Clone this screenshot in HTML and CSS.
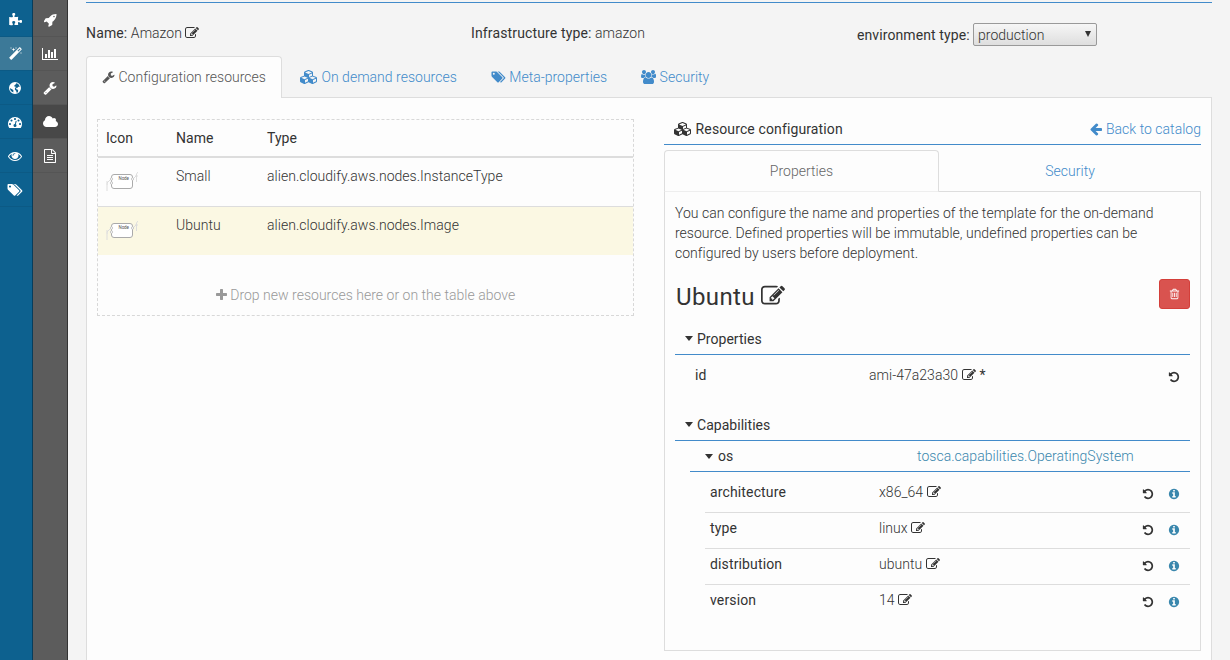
FILE: index.html
```html
<!DOCTYPE html>
<html lang="en">
<head>
<meta charset="utf-8">
<title>Amazon</title>
<link rel="stylesheet" href="styles.css">
</head>
<body>
<svg class="sprite">
<symbol id="edit" viewBox="0 0 1792 1792"><path d="M888 1184l116-116-152-152-116 116v56h96v96h56zm440-720q-16-16-33 1l-350 350q-17 17-1 33t33-1l350-350q17-17 1-33zm80 594v190q0 119-84.500 203.500t-203.500 84.500h-832q-119 0-203.500-84.500t-84.500-203.500v-832q0-119 84.500-203.500t203.500-84.500h832q63 0 117 25 15 7 18 23 3 17-9 29l-49 49q-14 14-32 8-23-6-45-6h-832q-66 0-113 47t-47 113v832q0 66 47 113t113 47h832q66 0 113-47t47-113v-126q0-13 9-22l64-64q15-15 35-7t20 29zm-96-738l288 288-672 672h-288v-288zm444 132l-92 92-288-288 92-92q28-28 68-28t68 28l152 152q28 28 28 68t-28 68z"/></symbol>
<symbol id="wrench" viewBox="0 0 1792 1792"><path d="M448 1472q0-26-19-45t-45-19-45 19-19 45 19 45 45 19 45-19 19-45zm644-420l-682 682q-37 37-90 37-52 0-91-37l-106-108q-38-36-38-90 0-53 38-91l681-681q39 98 114.500 173.500t173.500 114.500zm634-435q0 39-23 106-47 134-164.500 217.500t-258.500 83.500q-185 0-316.500-131.500t-131.500-316.500 131.500-316.500 316.500-131.500q58 0 121.500 16.500t107.500 46.500q16 11 16 28t-16 28l-293 169v224l193 107q5-3 79-48.500t135.500-81 70.500-35.500q15 0 23.500 10t8.500 25z"/></symbol>
<symbol id="tags" viewBox="64 0 2048 1792"><path d="M576 448q0-53-37.500-90.500t-90.500-37.500-90.500 37.500-37.500 90.500 37.500 90.500 90.500 37.500 90.500-37.500 37.500-90.500zm1067 576q0 53-37 90l-491 492q-39 37-91 37-53 0-90-37l-715-716q-38-37-64.500-101t-26.500-117v-416q0-52 38-90t90-38h416q53 0 117 26.500t102 64.500l715 714q37 39 37 91zm384 0q0 53-37 90l-491 492q-39 37-91 37-36 0-59-14t-53-45l470-470q37-37 37-90 0-52-37-91l-715-714q-38-38-102-64.500t-117-26.500h224q53 0 117 26.500t102 64.500l715 714q37 39 37 91z"/></symbol>
<symbol id="plus" viewBox="192 0 1408 1792"><path d="M1600 736v192q0 40-28 68t-68 28h-416v416q0 40-28 68t-68 28h-192q-40 0-68-28t-28-68v-416h-416q-40 0-68-28t-28-68v-192q0-40 28-68t68-28h416v-416q0-40 28-68t68-28h192q40 0 68 28t28 68v416h416q40 0 68 28t28 68z"/></symbol>
<symbol id="back" viewBox="128 0 1664 1792"><path d="M1664 896v128q0 53-32.500 90.500t-84.500 37.500h-704l293 294q38 36 38 90t-38 90l-75 76q-37 37-90 37-52 0-91-37l-651-652q-37-37-37-90 0-52 37-91l651-650q38-38 91-38 52 0 90 38l75 74q38 38 38 91t-38 91l-293 293h704q52 0 84.500 37.500t32.500 90.500z"/></symbol>
<symbol id="undo" viewBox="128 0 1536 1792"><path d="M1664 896q0 156-61 298t-164 245-245 164-298 61q-172 0-327-72.500t-264-204.500q-7-10-6.500-22.500t8.500-20.500l137-138q10-9 25-9 16 2 23 12 73 95 179 147t225 52q104 0 198.500-40.500t163.500-109.500 109.500-163.500 40.500-198.500-40.500-198.500-109.500-163.500-163.500-109.500-198.500-40.500q-98 0-188 35.500t-160 101.500l137 138q31 30 14 69-17 40-59 40h-448q-26 0-45-19t-19-45v-448q0-42 40-59 39-17 69 14l130 129q107-101 244.500-156.500t284.500-55.500q156 0 298 61t245 164 164 245 61 298z"/></symbol>
<symbol id="info" viewBox="128 0 1536 1792"><path d="M1152 1376v-160q0-14-9-23t-23-9h-96v-512q0-14-9-23t-23-9h-320q-14 0-23 9t-9 23v160q0 14 9 23t23 9h96v320h-96q-14 0-23 9t-9 23v160q0 14 9 23t23 9h448q14 0 23-9t9-23zm-128-896v-160q0-14-9-23t-23-9h-192q-14 0-23 9t-9 23v160q0 14 9 23t23 9h192q14 0 23-9t9-23zm640 416q0 209-103 385.500t-279.500 279.500-385.500 103-385.500-103-279.500-279.500-103-385.500 103-385.500 279.500-279.500 385.500-103 385.500 103 279.500 279.500 103 385.500z"/></symbol>
<symbol id="trash" viewBox="192 0 1408 1792"><path d="M704 736v576q0 14-9 23t-23 9h-64q-14 0-23-9t-9-23v-576q0-14 9-23t23-9h64q14 0 23 9t9 23zm256 0v576q0 14-9 23t-23 9h-64q-14 0-23-9t-9-23v-576q0-14 9-23t23-9h64q14 0 23 9t9 23zm256 0v576q0 14-9 23t-23 9h-64q-14 0-23-9t-9-23v-576q0-14 9-23t23-9h64q14 0 23 9t9 23zm128 724v-948h-896v948q0 22 7 40.500t14.500 27 10.500 8.500h832q3 0 10.500-8.500t14.500-27 7-40.500zm-672-1076h448l-48-117q-7-9-17-11h-317q-10 2-17 11zm928 32v64q0 14-9 23t-23 9h-96v948q0 83-47 143.500t-113 60.500h-832q-66 0-113-58.500t-47-141.500v-952h-96q-14 0-23-9t-9-23v-64q0-14 9-23t23-9h309l70-167q15-37 54-63t79-26h320q40 0 79 26t54 63l70 167h309q14 0 23 9t9 23z"/></symbol>
<symbol id="cloud" viewBox="64 0 1920 1792"><path d="M1984 1152q0 159-112.500 271.500t-271.500 112.500h-1088q-185 0-316.500-131.500t-131.500-316.500q0-132 71-241.500t187-163.500q-2-28-2-43 0-212 150-362t362-150q158 0 286.500 88t187.500 230q70-62 166-62 106 0 181 75t75 181q0 75-41 138 129 30 213 134.500t84 239.500z"/></symbol>
<symbol id="eye" viewBox="0 0 1792 1792"><path d="M1664 960q-152-236-381-353 61 104 61 225 0 185-131.500 316.500t-316.500 131.500-316.500-131.500-131.500-316.500q0-121 61-225-229 117-381 353 133 205 333.500 326.500t434.500 121.500 434.500-121.500 333.500-326.500zm-720-384q0-20-14-34t-34-14q-125 0-214.500 89.500t-89.500 214.500q0 20 14 34t34 14 34-14 14-34q0-86 61-147t147-61q20 0 34-14t14-34zm848 384q0 34-20 69-140 230-376.500 368.500t-499.500 138.500-499.500-139-376.500-368q-20-35-20-69t20-69q140-229 376.500-368t499.500-139 499.500 139 376.500 368q20 35 20 69z"/></symbol>
<symbol id="chart" viewBox="0 0 2048 1792"><path d="M640 896v512h-256v-512h256zm384-512v1024h-256v-1024h256zm1024 1152v128h-2048v-1536h128v1408h1920zm-640-896v768h-256v-768h256zm384-384v1152h-256v-1152h256z"/></symbol>
<symbol id="rocket" viewBox="64 0 1664 1792"><path d="M1440 448q0-40-28-68t-68-28-68 28-28 68 28 68 68 28 68-28 28-68zm224-288q0 249-75.500 430.500t-253.500 360.500q-81 80-195 176l-20 379q-2 16-16 26l-384 224q-7 4-16 4-12 0-23-9l-64-64q-13-14-8-32l85-276-281-281-276 85q-3 1-9 1-14 0-23-9l-64-64q-17-19-5-39l224-384q10-14 26-16l379-20q96-114 176-195 188-187 358-258t431-71q14 0 24 9.500t10 22.500z"/></symbol>
<symbol id="file" viewBox="128 0 1536 1792"><path d="M1596 380q28 28 48 76t20 88v1152q0 40-28 68t-68 28h-1344q-40 0-68-28t-28-68v-1600q0-40 28-68t68-28h896q40 0 88 20t76 48zm-444-244v376h376q-10-29-22-41l-313-313q-12-12-41-22zm384 1528v-1024h-416q-40 0-68-28t-28-68v-416h-768v1536h1280zm-1024-864q0-14 9-23t23-9h704q14 0 23 9t9 23v64q0 14-9 23t-23 9h-704q-14 0-23-9t-9-23v-64zm736 224q14 0 23 9t9 23v64q0 14-9 23t-23 9h-704q-14 0-23-9t-9-23v-64q0-14 9-23t23-9h704zm0 256q14 0 23 9t9 23v64q0 14-9 23t-23 9h-704q-14 0-23-9t-9-23v-64q0-14 9-23t23-9h704z"/></symbol>
<symbol id="cubes" viewBox="0 0 2304 1792"><path d="M640 1632l384-192v-314l-384 164v342zm-64-454l404-173-404-173-404 173zm1088 454l384-192v-314l-384 164v342zm-64-454l404-173-404-173-404 173zm-448-293l384-165v-266l-384 164v267zm-64-379l441-189-441-189-441 189zm1088 518v416q0 36-19 67t-52 47l-448 224q-25 14-57 14t-57-14l-448-224q-4-2-7-4-2 2-7 4l-448 224q-25 14-57 14t-57-14l-448-224q-33-16-52-47t-19-67v-416q0-38 21.500-70t56.500-48l434-186v-400q0-38 21.500-70t56.500-48l448-192q23-10 50-10t50 10l448 192q35 16 56.500 48t21.500 70v400l434 186q36 16 57 48t21 70z"/></symbol>
<symbol id="users" viewBox="-64 0 1920 1792"><path d="M529 896q-162 5-265 128h-134q-82 0-138-40.500t-56-118.500q0-353 124-353 6 0 43.500 21t97.500 42.500 119 21.500q67 0 133-23-5 37-5 66 0 159 93 293zm1071 637q0 120-73 189.500t-194 69.500h-874q-121 0-194-69.500t-73-189.500q0-53 3.500-103.500t14-109 26.500-108.500 43-97.500 62-81 85.500-53.500 111.500-20q10 0 43 21.500t73 48 107 48 135 21.500 135-21.500 107-48 73-48 43-21.500q61 0 111.500 20t85.500 53.500 62 81 43 97.500 26.500 108.500 14 109 3.500 103.500zm-1024-1277q0 106-75 181t-181 75-181-75-75-181 75-181 181-75 181 75 75 181zm704 384q0 159-112.500 271.500t-271.500 112.500-271.500-112.500-112.500-271.500 112.500-271.500 271.500-112.500 271.500 112.500 112.500 271.500zm576 225q0 78-56 118.500t-138 40.500h-134q-103-123-265-128 93-134 93-293 0-29-5-66 66 23 133 23 59 0 119-21.500t97.500-42.500 43.500-21q124 0 124 353zm-128-609q0 106-75 181t-181 75-181-75-75-181 75-181 181-75 181 75 75 181z"/></symbol>
<symbol id="puzzle" viewBox="64 0 1664 1792"><path d="M1755 1082q0 81-44.500 135t-123.500 54q-41 0-77.500-17.500t-59-38-56.500-38-71-17.500q-110 0-110 124 0 39 16 115t15 115v5q-22 0-33 1-34 3-97.500 11.500t-115.500 13.500-98 5q-61 0-103-26.500t-42-83.500q0-37 17.500-71t38-56.500 38-59 17.500-77.500q0-79-54-123.500t-135-44.500q-84 0-143 45.500t-59 127.500q0 43 15 83t33.500 64.500 33.500 53 15 50.500q0 45-46 89-37 35-117 35-95 0-245-24-9-2-27.500-4t-27.500-4l-13-2q-1 0-3-1-2 0-2-1v-1024q2 1 17.500 3.500t34 5 21.500 3.500q150 24 245 24 80 0 117-35 46-44 46-89 0-22-15-50.500t-33.500-53-33.500-64.500-15-83q0-82 59-127.500t144-45.500q80 0 134 44.500t54 123.500q0 41-17.500 77.500t-38 59-38 56.500-17.500 71q0 57 42 83.500t103 26.500q64 0 180-15t163-17v2q-1 2-3.500 17.500t-5 34-3.500 21.500q-24 150-24 245 0 80 35 117 44 46 89 46 22 0 50.500-15t53-33.500 64.500-33.500 83-15q82 0 127.500 59t45.500 143z"/></symbol>
<symbol id="magic" viewBox="64 0 1664 1792"><path d="M1254 581l293-293-107-107-293 293zm447-293q0 27-18 45l-1286 1286q-18 18-45 18t-45-18l-198-198q-18-18-18-45t18-45l1286-1286q18-18 45-18t45 18l198 198q18 18 18 45zm-1351-190l98 30-98 30-30 98-30-98-98-30 98-30 30-98zm350 162l196 60-196 60-60 196-60-196-196-60 196-60 60-196zm930 478l98 30-98 30-30 98-30-98-98-30 98-30 30-98zm-640-640l98 30-98 30-30 98-30-98-98-30 98-30 30-98z"/></symbol>
<symbol id="gauge" viewBox="0 0 1792 1792"><path d="M384 1152q0-53-37.500-90.500t-90.500-37.500-90.500 37.500-37.500 90.500 37.500 90.500 90.500 37.500 90.500-37.500 37.500-90.500zm192-448q0-53-37.500-90.500t-90.500-37.500-90.500 37.500-37.500 90.500 37.500 90.500 90.500 37.500 90.500-37.500 37.500-90.500zm428 481l101-382q6-26-7.500-48.500t-38.500-29.500-48 6.500-30 39.500l-101 382q-60 5-107 43.500t-63 98.500q-20 77 20 146t117 89 146-20 89-117q16-60-6-117t-72-91zm660-33q0-53-37.500-90.500t-90.500-37.500-90.500 37.500-37.500 90.500 37.500 90.500 90.500 37.500 90.500-37.500 37.500-90.500zm-640-640q0-53-37.500-90.500t-90.500-37.500-90.500 37.500-37.500 90.500 37.500 90.500 90.500 37.500 90.500-37.500 37.500-90.500zm448 192q0-53-37.500-90.500t-90.500-37.500-90.500 37.500-37.500 90.500 37.500 90.500 90.500 37.500 90.500-37.500 37.500-90.500zm320 448q0 261-141 483-19 29-54 29h-1402q-35 0-54-29-141-221-141-483 0-182 71-348t191-286 286-191 348-71 348 71 286 191 191 286 71 348z"/></symbol>
<symbol id="globe" viewBox="128 0 1536 1792"><path fill-rule="evenodd" d="M896 128a768 768 0 1 0 0 1536a768 768 0 1 0 0-1536zM1060 290l130 40 170 130 110 180 30 100-110-20-120 50-60 110-110-20-60 80 40 100 140 50 90 110-40 200-130 120-70-130-40-150-110-90-50-140 60-150 80-80-100-90-90 20-40-90 160-130zM700 1480l-190-90-150-140-90-180-30-170 90 60 140 50 150 110 90 130-40 110z"/></symbol>
<symbol id="node" viewBox="0 0 32 22"><rect x="5.500" y="4.500" width="21" height="14" rx="2.500" fill="#fff" stroke="#aaa"/><g fill="#fff" stroke="#bbb" stroke-width=".8"><circle cx="5.500" cy="9" r="1.200"/><circle cx="5.500" cy="13" r="1.200"/><circle cx="26.500" cy="9" r="1.200"/></g><path d="M4 10L1 13M1 11v10M2 14h-1.500M28 8l2-2M30.500 12V4l1.500-2M29 6h3" fill="none" stroke="#ddd"/><text x="12.500" y="10.300" font-size="4.500" font-weight="400" textLength="10.500" fill="#555">Node</text></symbol>
</svg>
<div class="app">
<nav class="rail blue">
<a><svg class="i w13"><use href="#puzzle"/></svg></a>
<a class="on"><svg class="i w13"><use href="#magic"/></svg></a>
<a><svg class="i w12"><use href="#globe"/></svg></a>
<a><svg class="i w14"><use href="#gauge"/></svg></a>
<a><svg class="i w14"><use href="#eye"/></svg></a>
<a><svg class="i w16"><use href="#tags"/></svg></a>
</nav>
<nav class="rail grey">
<a><svg class="i w13"><use href="#rocket"/></svg></a>
<a><svg class="i w16"><use href="#chart"/></svg></a>
<a><svg class="i w14"><use href="#wrench"/></svg></a>
<a class="on"><svg class="i w15"><use href="#cloud"/></svg></a>
<a><svg class="i w12"><use href="#file"/></svg></a>
</nav>
<main class="main">
<header class="summary">
<div><b>Name:</b> Amazon <svg class="i w14"><use href="#edit"/></svg></div>
<div><b>Infrastructure type:</b> amazon</div>
<div class="env"><b>environment type:</b><span class="select">production<i></i></span></div>
</header>
<div class="tabs">
<a class="tab on"><svg class="i w13"><use href="#wrench"/></svg> Configuration resources</a>
<a class="tab"><svg class="i w18"><use href="#cubes"/></svg> On demand resources</a>
<a class="tab"><svg class="i w15"><use href="#tags"/></svg> Meta-properties</a>
<a class="tab"><svg class="i w15"><use href="#users"/></svg> Security</a>
</div>
<section class="pane">
<div class="drop">
<div class="row head"><b>Icon</b><b>Name</b><b>Type</b></div>
<div class="row"><svg class="node"><use href="#node"/></svg><span>Small</span><span>alien.cloudify.aws.nodes.InstanceType</span></div>
<div class="row picked"><svg class="node"><use href="#node"/></svg><span>Ubuntu</span><span>alien.cloudify.aws.nodes.Image</span></div>
<div class="hint"><svg class="i w11"><use href="#plus"/></svg> Drop new resources here or on the table above</div>
</div>
<div class="config">
<div class="title"><span><svg class="i w18"><use href="#cubes"/></svg> Resource configuration</span><a><svg class="i w13"><use href="#back"/></svg> Back to catalog</a></div>
<div class="subtabs"><a class="on">Properties</a><a>Security</a></div>
<div class="details">
<p>You can configure the name and properties of the template for the on-demand resource. Defined properties will be immutable, undefined properties can be configured by users before deployment.</p>
<div class="name"><h3>Ubuntu <svg class="big"><use href="#edit"/></svg></h3><button class="del"><svg class="small"><use href="#trash"/></svg></button></div>
<div class="group"><i class="caret"></i>Properties</div>
<div class="prop id"><b>id</b><span>ami-47a23a30 <svg class="i w14"><use href="#edit"/></svg> <b>*</b></span><svg class="small"><use href="#undo"/></svg></div>
<div class="group"><i class="caret"></i>Capabilities</div>
<div class="cap"><i class="caret"></i><b>os</b><a>tosca.capabilities.OperatingSystem</a></div>
<div class="list">
<div class="prop"><b>architecture</b><span>x86_64 <svg class="i w14"><use href="#edit"/></svg></span><svg class="small"><use href="#undo"/></svg><svg class="small info"><use href="#info"/></svg></div>
<div class="prop"><b>type</b><span>linux <svg class="i w14"><use href="#edit"/></svg></span><svg class="small"><use href="#undo"/></svg><svg class="small info"><use href="#info"/></svg></div>
<div class="prop"><b>distribution</b><span>ubuntu <svg class="i w14"><use href="#edit"/></svg></span><svg class="small"><use href="#undo"/></svg><svg class="small info"><use href="#info"/></svg></div>
<div class="prop"><b>version</b><span>14 <svg class="i w14"><use href="#edit"/></svg></span><svg class="small"><use href="#undo"/></svg><svg class="small info"><use href="#info"/></svg></div>
</div>
</div>
</div>
</section>
</main>
</div>
</body>
</html>
```
FILE: styles.css
```css
* { box-sizing: border-box; }
body { margin: 0; height: 660px; overflow: hidden; background: #f4f4f4; color: #333; font: 300 14px/20px Roboto, sans-serif; letter-spacing: .03px; }
b { font-weight: 400; letter-spacing: .14px; }
a { color: #428bca; }
svg { fill: currentColor; }
.sprite { display: none; }
.i { height: 14px; vertical-align: -2px; }
.w11 { width: 11px; }
.w12 { width: 12px; }
.w13 { width: 13px; }
.w14 { width: 14px; }
.w15 { width: 15px; }
.w16 { width: 16px; }
.w18 { width: 18px; }
.small { width: 11px; height: 12px; }
.app { display: flex; height: 660px; }
.rail { flex: none; padding-top: 3px; display: flex; flex-direction: column; }
.rail a { height: 34px; display: flex; align-items: center; justify-content: center; color: #fff; }
.blue { width: 33px; background: #0d618f; border-right: 1px solid #063d5c; padding-right: 2px; }
.blue a { border-bottom: 1px solid #0c5a85; margin-right: -2px; padding-right: 2px; }
.blue .on { background: #3c7998; }
.grey { width: 35px; background: #5c5c5c; border-right: 1px solid #333; }
.grey a { border-bottom: 1px solid #555; }
.grey .on { background: #484848; }
.main { width: 1126px; margin: 2px 0 0 18px; border-top: 1px solid #428bca; flex: none; }
.summary { display: grid; grid-template-columns: 385px 386px 1fr; padding-top: 20px; height: 53px; }
.env { display: flex; }
.env b { padding-top: 2px; width: 116px; white-space: nowrap; letter-spacing: .1px; }
.select { display: flex; align-items: center; justify-content: space-between; width: 124px; height: 23px; padding: 0 5px 0 4px; border: 1px solid #999; border-radius: 2px; background: linear-gradient(#f6f6f6, #dedede); }
.select i { border: 3px solid transparent; border-top: 6px solid #333; border-bottom: 0; margin-top: -2px; }
.tabs { display: flex; gap: 1px; height: 41px; letter-spacing: .02px; }
.tab { padding: 11px 16px 0 17px; white-space: nowrap; }
.tab.on { width: 196px; height: 42px; padding: 10px 0 0 15px; color: #555; background: #fdfdfd; border: 1px solid #ddd; border-bottom: 0; border-radius: 4px 4px 0 0; z-index: 1; }
.pane { display: flex; justify-content: space-between; height: 563px; padding: 21px 10px 0; background: #fdfdfd; border: 1px solid #ddd; border-bottom: 0; }
.drop { width: 537px; height: 197px; border: 1px dashed #d8d8d8; }
.row { display: grid; grid-template-columns: 70px 91px 1fr; height: 49px; padding: 8px 8px 0; border-bottom: 1px solid #ddd; }
.head { height: 38px; border-bottom-width: 2px; }
.head b { letter-spacing: .02px; }
.node { width: 32px; height: 22px; margin-top: 4px; }
.picked { height: 48px; background: #fbf8e3; border: 0; }
.hint { padding-top: 30px; text-align: center; color: #999; letter-spacing: .02px; }
.config { width: 537px; }
.title { display: flex; justify-content: space-between; height: 26px; padding-left: 10px; border-bottom: 1px solid #428bca; font-weight: 400; letter-spacing: .12px; }
.title a { font-weight: 300; letter-spacing: .02px; }
.subtabs { display: flex; height: 41px; margin-top: 5px; }
.subtabs a { width: 262px; height: 41px; padding-top: 11px; text-align: center; }
.subtabs .on { width: 275px; height: 42px; padding-top: 10px; color: #666; background: #fdfdfd; border: 1px solid #ddd; border-bottom-color: #eee; border-radius: 4px 4px 0 0; z-index: 1; }
.details { height: 460px; padding: 11px 10px 0; border: 1px solid #ddd; }
p { margin: 0; width: 500px; letter-spacing: .02px; }
.name { display: flex; justify-content: space-between; margin-top: 16px; height: 50px; }
h3 { margin: 5px 0 0 1px; font: 400 24px/26px Roboto, sans-serif; letter-spacing: .4px; word-spacing: -.5px; }
.big { width: 24px; height: 24px; vertical-align: -3px; }
.del { width: 31px; height: 30px; padding: 2px 0 0; color: #fff; background: #d9534f; border: 1px solid #d43f3a; border-radius: 3px; }
.group { display: flex; align-items: center; height: 26px; padding: 0 0 6px 10px; border-bottom: 1px solid #428bca; font-weight: 400; }
.caret { border: 4px solid transparent; border-top: 5px solid #333; border-bottom: 0; margin-right: 4px; }
.prop { display: flex; height: 36px; padding: 5px 10px 0 5px; border-bottom: 1px solid #ddd; }
.prop > b { width: 169px; }
.prop > span { flex: 1; word-spacing: .3px; }
.prop > svg { margin-top: 6px; }
.prop > .small { width: 12px; height: 12px; }
.prop .info { color: #3a87ad; margin-left: 14px; }
.prop:last-child { border: 0; }
.id { height: 60px; padding: 10px 10px 0 20px; border: 0; }
.id > b { width: 174px; }
.cap { display: flex; align-items: center; height: 31px; margin-left: 15px; padding-left: 15px; border-bottom: 1px solid #428bca; }
.cap b { width: 199px; margin-left: 1px; }
.cap a { color: #3a87ad; }
.list { margin-left: 30px; padding-top: 5px; }
```
